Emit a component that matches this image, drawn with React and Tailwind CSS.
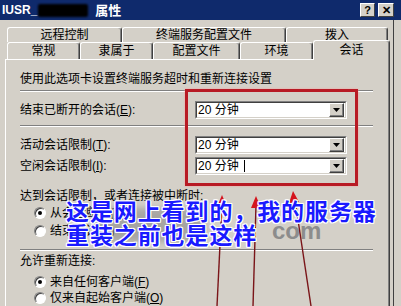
import React from 'react'

const FONT = "font-['Liberation_Sans','Noto_Sans_CJK_SC',sans-serif]"

function Tab({label, className = '', active = false}) {
  return (
    <div
      className={`flex items-center justify-center border-t border-l border-white border-r border-r-[#404040] rounded-t-[3px] shadow-[inset_-1px_0_0_#808080] bg-[#d4d0c8] text-[12px] leading-none ${active ? 'h-[20px] relative z-10 translate-y-[1px] pb-[2px]' : 'h-full'} ${className}`}
    >
      {label}
    </div>
  )
}

function Sep() {
  return <div className="w-[353px] h-[2px] border-t border-[#808080] border-b border-b-white" />
}

function Combo({caret = false}) {
  return (
    <div className="w-[152px] h-[18px] border border-[#808080] border-r-white border-b-white">
      <div className="h-full flex items-center bg-white border border-[#404040] border-r-[#d4d0c8] border-b-[#d4d0c8]">
        <span className="flex-1 flex items-center pl-[1px] text-[12px] leading-none whitespace-pre">
          20 分钟{caret && <span className="ml-[5px] w-px h-[12px] bg-black" />}
        </span>
        <span className="w-[15px] h-[14px] mr-px flex items-center justify-center bg-[#d4d0c8] border border-white border-r-[#404040] border-b-[#404040] shadow-[inset_-1px_-1px_0_#808080]">
          <svg width="7" height="4" viewBox="0 0 7 4"><path d="M0 0h7L3.5 4z" fill="#000" /></svg>
        </span>
      </div>
    </div>
  )
}

function Radio({checked = false}) {
  return (
    <span className="relative w-[12px] h-[12px] rounded-full bg-white border border-[#808080] border-r-white border-b-white shadow-[inset_1px_1px_0_#404040]">
      {checked && <span className="absolute left-[3px] top-[3px] w-[4px] h-[4px] rounded-full bg-black" />}
    </span>
  )
}

function Key({k}) {
  return <span className="font-['Liberation_Sans',sans-serif]">(<span className="underline">{k}</span>)</span>
}

function Arrows() {
  return (
    <svg className="absolute left-0 top-0 pointer-events-none" width="401" height="306" viewBox="0 0 401 306">
      <g stroke="#7a1418" strokeWidth="1.4" fill="none">
        <line x1="217" y1="306" x2="222" y2="204" />
        <line x1="253" y1="306" x2="256" y2="205" />
        <line x1="311" y1="306" x2="295" y2="200" />
      </g>
      <g fill="#d4141c">
        <path d="M222 195 L227 207 L217 207 Z" />
        <path d="M256 196 L261 208 L251 208 Z" />
        <path d="M293 191 L299 202 L289 203 Z" />
      </g>
    </svg>
  )
}

export default function App() {
  return (
    <div className={`relative w-[401px] h-[306px] overflow-hidden bg-[#d4d0c8] text-black ${FONT}`}>
      {/* title bar */}
      <div className="h-[20px] bg-[#0f2a6c] flex items-center pl-[2px] pr-[7px]">
        <span className="text-white font-bold text-[12px] leading-none font-['Liberation_Sans',sans-serif]">IUSR_</span>
        <span className="ml-[1px] w-[50px] h-[13px] bg-black rounded-[2px] blur-[1px]" />
        <span className="ml-[7px] text-white font-bold text-[13px] leading-none">属性</span>
        <div className="ml-auto flex gap-[3px]">
          <span className="w-[15px] h-[14px] flex items-center justify-center bg-[#d4d0c8] border border-white border-r-[#404040] border-b-[#404040] text-[11px] font-bold leading-none">?</span>
          <span className="w-[16px] h-[14px] flex items-center justify-center bg-[#d4d0c8] border border-white border-r-[#404040] border-b-[#404040] text-[11px] font-bold leading-none">✕</span>
        </div>
      </div>

      <div className="flex h-[286px]">
        <div className="pl-[5px] flex flex-col">
          {/* tabs */}
          <div className="mt-[7px] ml-[2px] h-[16px] flex">
            <Tab label="远程控制" className="w-[115px]" />
            <Tab label="终端服务配置文件" className="w-[164px]" />
            <Tab label="拨入" className="w-[102px]" />
          </div>
          <div className="ml-[2px] h-[17px] flex items-end">
            <Tab label="常规" className="w-[73px]" />
            <Tab label="隶属于" className="w-[73px]" />
            <Tab label="配置文件" className="w-[87px]" />
            <Tab label="环境" className="w-[73px]" />
            <Tab label="会话" className="w-[77px]" active />
          </div>

          {/* panel */}
          <div className="flex-1 w-[385px] border-t border-l border-white border-r border-r-[#404040] shadow-[inset_-1px_0_0_#808080] pl-[14px] flex flex-col text-[12px] leading-none">
            <div className="mt-[12px] h-[14px] flex items-center">使用此选项卡设置终端服务超时和重新连接设置</div>
            <div className="mt-[4px]"><Sep /></div>

            <div className="mt-[9px] flex items-center">
              <span className="w-[175px]">结束已断开的会话<Key k="E" />:</span>
              <Combo />
            </div>
            <div className="mt-[6px]"><Sep /></div>

            <div className="mt-[9px] flex items-center">
              <span className="w-[175px]">活动会话限制<Key k="T" />:</span>
              <Combo />
            </div>
            <div className="mt-[3px] flex items-center">
              <span className="w-[175px]">空闲会话限制<Key k="I" />:</span>
              <Combo caret />
            </div>

            <div className="mt-[14px] h-[14px] flex items-center">达到会话限制，或者连接被中断时:</div>
            <div className="mt-px h-[18px] flex items-center pl-[14px] gap-[4px]">
              <Radio checked />
              <span>从会话断开<Key k="B" /></span>
            </div>
            <div className="h-[18px] flex items-center pl-[14px] gap-[4px]">
              <Radio />
              <span>结束会话<Key k="N" /></span>
            </div>
            <div className="mt-[9px]"><Sep /></div>

            <div className="mt-[3px] h-[14px] flex items-center">允许重新连接:</div>
            <div className="mt-[6px] h-[16px] flex items-center pl-[14px] gap-[4px]">
              <Radio checked />
              <span>来自任何客户端<Key k="F" /></span>
            </div>
            <div className="h-[16px] flex items-center pl-[14px] gap-[4px]">
              <Radio />
              <span>仅来自起始客户端<Key k="O" /></span>
            </div>
          </div>
        </div>
        <div className="ml-[3px] w-px bg-[#404040]" />
      </div>

      {/* annotations */}
      <div className="absolute left-[185px] top-[89px] w-[173px] h-[97px] border-[3px] border-[#b81a24] shadow-[0_0_2px_#f4a0a0]" />
      <div className="absolute left-[95px] top-[208px] w-[110px] h-[34px] bg-[#8a8a8a] opacity-60 blur-[3px] rounded" />
      <div className="absolute left-[272px] top-[219px] text-[24px] font-bold leading-none text-[#8c8c8c] font-['Liberation_Sans',sans-serif]">com</div>
      <Arrows />
      <div className="absolute left-[66px] top-[198px] text-[23px] leading-[24px] font-bold tracking-[0.9px] text-[#1a1aff] font-['Noto_Sans_CJK_SC',sans-serif] [text-shadow:1px_0_0_#fff,-1px_0_0_#fff,0_1px_0_#fff,0_-1px_0_#fff,1px_1px_0_#fff,-1px_-1px_0_#fff,1px_-1px_0_#fff,-1px_1px_0_#fff]">
        <div>这是网上看到的，我的服务器</div>
        <div>重装之前也是这样</div>
      </div>
    </div>
  )
}
